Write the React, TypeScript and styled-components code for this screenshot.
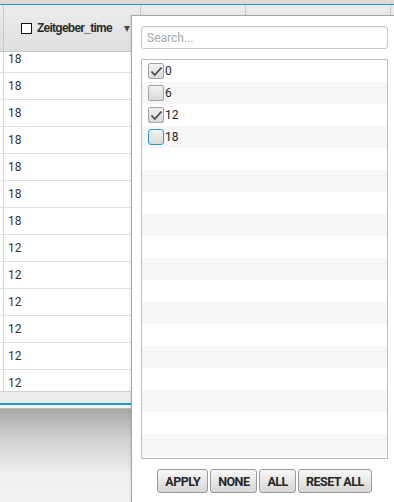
import React from "react";
import styled, { createGlobalStyle, css } from "styled-components";

const Global = createGlobalStyle`
  html, body { margin: 0; padding: 0; background: #f2f2f2; }
  body { font-family: Roboto, "Liberation Sans", Arial, sans-serif; }
  * { box-sizing: border-box; }
`;

const Page = styled.div`
  position: relative;
  width: 394px;
  height: 502px;
  overflow: hidden;
  display: flex;
  flex-direction: column;
  background: #f2f2f2;
`;

const TopStrip = styled.div`
  flex: none;
  height: 5px;
  background: #dadada;
  border-bottom: 1px solid #2b8fca;
`;

const HeaderRow = styled.div`
  display: flex;
  height: 47px;
  flex: none;
  background: linear-gradient(#ececec, #dfdfdf);
  border-bottom: 1px solid #c9c9c9;
  position: relative;
  z-index: 1;
`;

const HeaderCell = styled.div<{ $w: number; $bare?: boolean }>`
  width: ${(p) => p.$w}px;
  flex: none;
  border-right: 1px solid #c9c9c9;
  display: flex;
  align-items: center;
  padding: ${(p) => (p.$bare ? "0" : "0 10px 0 17px")};
  gap: 5px;
`;

const HeaderCheck = styled.span`
  width: 11px;
  height: 11px;
  border: 1px solid #111;
  background: #fff;
  flex: none;
`;

const HeaderLabel = styled.span`
  font-family: "Liberation Sans", Arial, sans-serif;
  font-weight: 700;
  font-size: 12px;
  letter-spacing: -0.75px;
  color: #2a2a2a;
`;

const SortArrow = styled.span`
  margin-left: auto;
  width: 0;
  height: 0;
  border-left: 3px solid transparent;
  border-right: 3px solid transparent;
  border-top: 6px solid #4a4a4a;
  margin-top: 2px;
`;

const Body = styled.div`
  height: 339px;
  flex: none;
  overflow: hidden;
  background: #fff;
`;

const BodyInner = styled.div`
  margin-top: -6px;
`;

const DataRow = styled.div`
  display: flex;
  height: 27px;
  border-bottom: 1px solid #e0e0e0;
`;

const EdgeCell = styled.div`
  width: 4px;
  flex: none;
  border-right: 1px solid #d6d6d6;
`;

const DataCell = styled.div`
  flex: 1;
  display: flex;
  align-items: center;
  padding-left: 4px;
  font-size: 12px;
  color: #333;
`;

const ScrollStrip = styled.div`
  height: 12px;
  flex: none;
  background: #ececec;
  border-top: 1px solid #d2d2d2;
`;

const BlueLine = styled.div`
  height: 2px;
  flex: none;
  background: #1e9ad9;
`;

const LightGap = styled.div`
  height: 4px;
  flex: none;
  background: #f3f3f3;
  border-bottom: 1px solid #bdbdbd;
`;

const Shade = styled.div`
  flex: 1;
  background: linear-gradient(#a8a8a8 0px, #d0d0d0 30px, #efefef 65px, #f3f3f3 100%);
`;

const Popup = styled.div`
  position: absolute;
  left: 131px;
  top: 15px;
  width: 266px;
  bottom: 0;
  background: #fff;
  border-left: 1px solid #a6a6a6;
  border-top: 1px solid #a6a6a6;
  box-shadow: -1px 0 2px rgba(0, 0, 0, 0.08);
  z-index: 2;
  display: flex;
  flex-direction: column;
  padding: 10px 11px 0 9px;
`;

const SearchBox = styled.input`
  height: 23px;
  width: 247px;
  border: 1px solid #c8c8c8;
  border-radius: 3px;
  padding: 0 5px;
  font-family: Roboto, "Liberation Sans", Arial, sans-serif;
  font-size: 12px;
  color: #333;
  box-shadow: inset 0 1px 2px rgba(0, 0, 0, 0.06);
  outline: none;
  &::placeholder { color: #a9a9a9; }
`;

const List = styled.div`
  margin-top: 10px;
  width: 247px;
  height: 400px;
  border: 1px solid #bdbdbd;
  overflow: hidden;
  flex: none;
`;

const ListRow = styled.div<{ $odd: boolean }>`
  height: 22px;
  display: flex;
  align-items: center;
  padding-left: 6px;
  background: ${(p) => (p.$odd ? "#f6f6f6" : "#fff")};
  font-size: 12px;
  color: #222;
  gap: 1px;
`;

const Box = styled.span<{ $focus?: boolean }>`
  width: 16px;
  height: 16px;
  flex: none;
  border-radius: 2px;
  border: 1px solid #a3a3a3;
  background: linear-gradient(#f2f2f2, #d9d9d9);
  display: flex;
  align-items: center;
  justify-content: center;
  ${(p) =>
    p.$focus &&
    css`
      border: 1.5px solid #2b9ad8;
      border-radius: 3px;
    `}
`;

const Buttons = styled.div`
  display: flex;
  justify-content: center;
  gap: 2px;
  margin-top: 10px;
  width: 247px;
`;

const Btn = styled.button`
  height: 24px;
  padding: 0 7px;
  border: 1px solid #9b9b9b;
  border-radius: 3px;
  background: linear-gradient(#f7f7f7, #d6d6d6);
  font-family: Roboto, "Liberation Sans", Arial, sans-serif;
  font-weight: 700;
  font-size: 12.5px;
  letter-spacing: -0.5px;
  color: #262626;
`;

const Check = () => (
  <svg width="13" height="11" viewBox="0 0 13 11">
    <path d="M1.5 5.5 L4.8 9 L11.5 1.5" fill="none" stroke="#4a4a4a" strokeWidth="1.8" />
  </svg>
);

const values = ["18", "18", "18", "18", "18", "18", "18", "12", "12", "12", "12", "12", "12"];
const items: { label: string; checked: boolean; focus?: boolean }[] = [
  { label: "0", checked: true },
  { label: "6", checked: false },
  { label: "12", checked: true },
  { label: "18", checked: false, focus: true },
];

export default function App() {
  const rows = Array.from({ length: 19 }, (_, i) => items[i]);
  return (
    <Page>
      <Global />
      <TopStrip />
      <HeaderRow>
        <HeaderCell $w={4} $bare />
        <HeaderCell $w={137}>
          <HeaderCheck />
          <HeaderLabel>Zeitgeber_time</HeaderLabel>
          <SortArrow />
        </HeaderCell>
        <HeaderCell $w={105} $bare />
        <HeaderCell $w={145} $bare />
      </HeaderRow>
      <Body>
        <BodyInner>
          {values.map((v, i) => (
            <DataRow key={i}>
              <EdgeCell />
              <DataCell>{v}</DataCell>
            </DataRow>
          ))}
        </BodyInner>
      </Body>
      <ScrollStrip />
      <BlueLine />
      <LightGap />
      <Shade />
      <Popup>
        <SearchBox placeholder="Search..." />
        <List>
          {rows.map((it, i) => (
            <ListRow key={i} $odd={i % 2 === 1}>
              {it && (
                <>
                  <Box $focus={it.focus}>{it.checked && <Check />}</Box>
                  <span>{it.label}</span>
                </>
              )}
            </ListRow>
          ))}
        </List>
        <Buttons>
          <Btn>APPLY</Btn>
          <Btn>NONE</Btn>
          <Btn>ALL</Btn>
          <Btn>RESET ALL</Btn>
        </Buttons>
      </Popup>
    </Page>
  );
}
